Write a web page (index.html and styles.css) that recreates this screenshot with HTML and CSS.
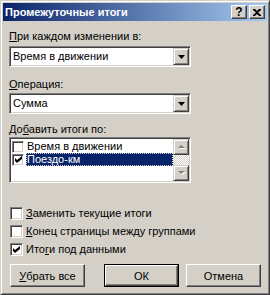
FILE: index.html
```html
<!DOCTYPE html>
<html lang="ru">
<head>
    <meta charset="UTF-8">
    <title>Промежуточные итоги</title>
    <link rel="stylesheet" href="styles.css">
</head>
<body>
    <div class="window">
        <div class="titlebar">
            <span class="title">Промежуточные итоги</span>
            <div class="title-buttons">
                <span class="tbtn help">?</span>
                <span class="tbtn close">
                    <svg width="8" height="7" viewBox="0 0 8 7">
                        <path d="M0 0h2l2 2 2-2h2v1L5 3.5 8 6v1H6L4 5 2 7H0V6l3-2.5L0 1z" fill="#000"/>
                    </svg>
                </span>
            </div>
        </div>

        <div class="content">
            <div class="label"><u>П</u>ри каждом изменении в:</div>
            <div class="combo">
                <span class="combo-text">Время в движении</span>
                <span class="combo-btn">
                    <svg width="7" height="4" viewBox="0 0 7 4"><path d="M0 0h7L3.5 4z" fill="#000"/></svg>
                </span>
            </div>

            <div class="label label-gap op-label"><u>О</u>перация:</div>
            <div class="combo">
                <span class="combo-text">Сумма</span>
                <span class="combo-btn">
                    <svg width="7" height="4" viewBox="0 0 7 4"><path d="M0 0h7L3.5 4z" fill="#000"/></svg>
                </span>
            </div>

            <div class="label list-label">До<u>б</u>авить итоги по:</div>
            <div class="listbox">
                <div class="list-items">
                    <div class="list-row">
                        <span class="check small"></span>
                        <span class="item-text">Время в движении</span>
                    </div>
                    <div class="list-row">
                        <span class="check small">
                            <svg width="7" height="7" viewBox="0 0 7 7"><path d="M0 2l2 2 5-4v3L2 7 0 5z" fill="#000"/></svg>
                        </span>
                        <span class="item-text selected">Поездо-км</span>
                    </div>
                </div>
                <div class="scrollbar">
                    <span class="sb-btn">
                        <svg width="9" height="6" viewBox="0 0 9 6"><path d="M4 1L1 4h7z" fill="#fff" transform="translate(1 1)"/><path d="M4 1L1 4h7z" fill="#808080"/></svg>
                    </span>
                    <span class="sb-track"></span>
                    <span class="sb-btn">
                        <svg width="9" height="6" viewBox="0 0 9 6"><path d="M1 1h7L4 4z" fill="#fff" transform="translate(1 1)"/><path d="M1 1h7L4 4z" fill="#808080"/></svg>
                    </span>
                </div>
            </div>

            <div class="options">
                <div class="option">
                    <span class="check"></span>
                    <span><u>З</u>аменить текущие итоги</span>
                </div>
                <div class="option">
                    <span class="check"></span>
                    <span><u>К</u>онец страницы между группами</span>
                </div>
                <div class="option">
                    <span class="check">
                        <svg width="7" height="7" viewBox="0 0 7 7"><path d="M0 2l2 2 5-4v3L2 7 0 5z" fill="#000"/></svg>
                    </span>
                    <span>Ито<u>г</u>и под данными</span>
                </div>
            </div>

            <div class="buttons">
                <span class="btn"><u>У</u>брать все</span>
                <div class="btn-group">
                    <span class="btn default"><span class="btn-inner">ОК</span></span>
                    <span class="btn">Отмена</span>
                </div>
            </div>
        </div>
    </div>
</body>
</html>
```

FILE: styles.css
```css
body {
    margin: 0;
    background-color: #d4d0c8;
    font-family: "Liberation Sans", Arial, sans-serif;
    font-size: 11px;
    color: #000;
}

.window {
    width: 270px;
    height: 295px;
    box-sizing: border-box;
    background: #d4d0c8;
    border: 1px solid;
    border-color: #d4d0c8 #404040 #404040 #d4d0c8;
    box-shadow: inset 1px 1px #fff, inset -1px -1px #808080;
    padding: 2px;
    display: flex;
    flex-direction: column;
}

/* title bar */
.titlebar {
    height: 18px;
    background: linear-gradient(to right, #0a246a, #a6caf0);
    display: flex;
    align-items: center;
    justify-content: space-between;
    padding: 0 2px 0 2px;
}
.title {
    color: #fff;
    font-weight: bold;
    font-size: 11px;
    white-space: nowrap;
}
.title-buttons {
    display: flex;
    gap: 2px;
}
.tbtn {
    width: 16px;
    height: 14px;
    box-sizing: border-box;
    background: #d4d0c8;
    border: 1px solid;
    border-color: #fff #404040 #404040 #fff;
    box-shadow: inset -1px -1px #808080;
    display: flex;
    align-items: center;
    justify-content: center;
}
.help {
    font-weight: bold;
    font-size: 12px;
    line-height: 12px;
}

/* body of the dialog */
.content {
    padding: 9px 6px 0 6px;
    display: flex;
    flex-direction: column;
}
.label {
    line-height: 13px;
    height: 13px;
    margin-bottom: 3px;
    white-space: nowrap;
}
.label-gap {
    margin-top: 11px;
}
.op-label {
    margin-bottom: 2px;
}
.list-label {
    margin-top: 9px;
    margin-bottom: 1px;
}
u {
    text-decoration: underline;
    text-underline-offset: 1px;
}

.combo {
    width: 182px;
    height: 21px;
    box-sizing: border-box;
    background: #fff;
    border: 1px solid;
    border-color: #808080 #fff #fff #808080;
    box-shadow: inset 1px 1px #404040, inset -1px -1px #d4d0c8;
    padding: 1px;
    display: flex;
}
.combo-text {
    flex: 1;
    padding-left: 2px;
    line-height: 17px;
}
.combo-btn, .sb-btn {
    width: 16px;
    box-sizing: border-box;
    background: #d4d0c8;
    border: 1px solid;
    border-color: #d4d0c8 #404040 #404040 #d4d0c8;
    box-shadow: inset 1px 1px #fff, inset -1px -1px #808080;
    display: flex;
    align-items: center;
    justify-content: center;
}
.combo-btn svg {
    margin-top: 1px;
}

/* list with checkboxes */
.listbox {
    width: 182px;
    height: 46px;
    box-sizing: border-box;
    background: #fff;
    border: 1px solid;
    border-color: #808080 #fff #fff #808080;
    box-shadow: inset 1px 1px #404040, inset -1px -1px #d4d0c8;
    padding: 1px;
    display: flex;
}
.list-items {
    flex: 1;
    padding-top: 1px;
}
.list-row {
    height: 13px;
    display: flex;
    align-items: center;
}
.list-row .check {
    margin: 0 2px 0 1px;
}
.item-text {
    flex: 1;
    height: 13px;
    line-height: 13px;
    padding-left: 1px;
    box-sizing: border-box;
}
.item-text.selected {
    background: #0a246a;
    color: #fff;
    outline: 1px dotted #d4d0c8;
    outline-offset: -1px;
}
.scrollbar {
    width: 16px;
    display: flex;
    flex-direction: column;
}
.sb-btn {
    height: 16px;
}
.sb-track {
    flex: 1;
    background-color: #fff;
    background-image: conic-gradient(#d4d0c8 25%, #fff 0 50%, #d4d0c8 0 75%, #fff 0);
    background-size: 2px 2px;
}

/* checkboxes */
.check {
    width: 13px;
    height: 13px;
    box-sizing: border-box;
    background: #fff;
    border: 1px solid;
    border-color: #808080 #fff #fff #808080;
    box-shadow: inset 1px 1px #404040, inset -1px -1px #d4d0c8;
    display: flex;
    align-items: center;
    justify-content: center;
    flex-shrink: 0;
}
.check.small {
    width: 12px;
    height: 12px;
}
.options {
    margin-top: 21px;
    margin-left: 1px;
}
.option {
    height: 18px;
    display: flex;
    align-items: center;
    gap: 3px;
    white-space: nowrap;
}

/* buttons */
.buttons {
    margin-top: 6px;
    display: flex;
    justify-content: space-between;
    padding-left: 1px;
}
.btn-group {
    display: flex;
    gap: 7px;
}
.btn {
    width: 75px;
    height: 23px;
    box-sizing: border-box;
    background: #d4d0c8;
    border: 1px solid;
    border-color: #fff #404040 #404040 #fff;
    box-shadow: inset -1px -1px #808080;
    display: flex;
    align-items: center;
    justify-content: center;
}
.btn.default {
    border: 1px solid #000;
    box-shadow: none;
}
.btn-inner {
    width: 100%;
    height: 100%;
    box-sizing: border-box;
    border: 1px solid;
    border-color: #fff #404040 #404040 #fff;
    box-shadow: inset -1px -1px #808080;
    display: flex;
    align-items: center;
    justify-content: center;
}
```
